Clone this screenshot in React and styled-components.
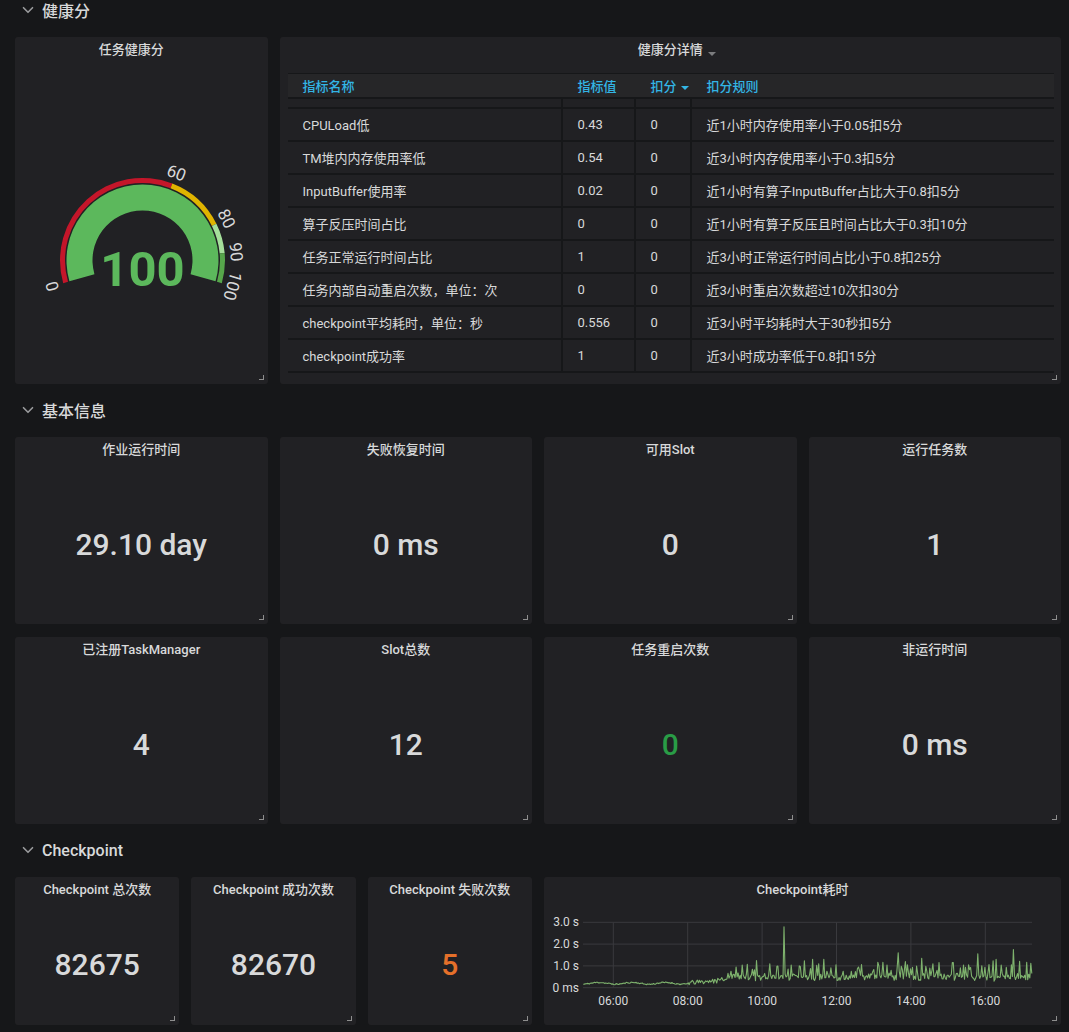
import styled, { createGlobalStyle } from "styled-components";
import { ChevronDown } from "lucide-react";

const GlobalStyle = createGlobalStyle`
  html, body { margin: 0; padding: 0; background: #161719; }
  body {
    font-family: Roboto, "Noto Sans CJK SC", sans-serif;
    color: #d8d9da;
  }
`;

const Page = styled.div`
  padding: 0 8px 8px 15px;
`;

const RowHeader = styled.div`
  display: flex;
  align-items: center;
  gap: 5px;
  height: 20px;
  margin: ${(p) => (p.$first ? "0" : "16px")} 0 17px 4px;
  font-size: 16px;
  font-weight: 500;
  color: #d8d9da;
  & svg { color: #9a9b9d; }
`;

const Grid = styled.div`
  display: grid;
  grid-template-columns: repeat(24, minmax(0, 1fr));
  grid-auto-rows: ${(p) => p.$rowHeight}px;
  column-gap: 12px;
  row-gap: 13px;
`;

const Panel = styled.div`
  grid-column: span ${(p) => p.$span};
  background: #212124;
  border-radius: 3px;
  position: relative;
  display: flex;
  flex-direction: column;
  overflow: hidden;
`;

const PanelTitle = styled.div`
  height: 26px;
  line-height: 26px;
  text-align: center;
  padding-right: ${(p) => p.$shift || 0}px;
  font-size: 13px;
  font-weight: 500;
  color: #d8d9da;
  & span { position: relative; }
`;

const Caret = styled.i`
  position: absolute;
  top: 10px;
  right: -13px;
  border-left: 4px solid transparent;
  border-right: 4px solid transparent;
  border-top: 4px solid #7b7c7e;
`;

const InlineCaret = styled.i`
  display: inline-block;
  margin-left: 4px;
  vertical-align: middle;
  border-left: 4px solid transparent;
  border-right: 4px solid transparent;
  border-top: 4px solid #33b5e5;
`;

const Resize = styled.span`
  position: absolute;
  right: 4px;
  bottom: 4px;
  width: 4px;
  height: 4px;
  border-right: 1px solid #8e8e8e;
  border-bottom: 1px solid #8e8e8e;
`;

const StatValue = styled.div`
  flex: 1;
  display: flex;
  align-items: center;
  justify-content: center;
  padding-top: ${(p) => p.$pad || 0}px;
  font-size: 30px;
  font-weight: 500;
  line-height: 1;
  color: ${(p) => p.$color || "#d8d9da"};
`;

/* ---------- table ---------- */

const Table = styled.div`
  margin: 10px 7px 0 8px;
  font-size: 13px;
`;

const cols = "275px 73px 56px 1fr";

const HeadRow = styled.div`
  box-sizing: border-box;
  display: grid;
  grid-template-columns: ${cols};
  height: 26px;
  align-items: center;
  background: #262628;
  border-top: 1px solid #161719;
  border-bottom: 2px solid #161719;
  color: #33b5e5;
  font-weight: 500;
`;

const HeadCell = styled.div`
  padding-left: 15px;
`;

const BodyRow = styled.div`
  box-sizing: border-box;
  display: grid;
  grid-template-columns: ${cols};
  height: ${(p) => p.$h}px;
  border-bottom: 2px solid #161719;
`;

const Cell = styled.div`
  display: flex;
  align-items: center;
  padding-left: 15px;
  border-right: ${(p) => (p.$last ? "none" : "2px solid #161719")};
  color: #d8d9da;
  white-space: nowrap;
`;

const rows = [
  ["CPULoad低", "0.43", "0", "近1小时内存使用率小于0.05扣5分"],
  ["TM堆内内存使用率低", "0.54", "0", "近3小时内存使用率小于0.3扣5分"],
  ["InputBuffer使用率", "0.02", "0", "近1小时有算子InputBuffer占比大于0.8扣5分"],
  ["算子反压时间占比", "0", "0", "近1小时有算子反压且时间占比大于0.3扣10分"],
  ["任务正常运行时间占比", "1", "0", "近3小时正常运行时间占比小于0.8扣25分"],
  ["任务内部自动重启次数，单位：次", "0", "0", "近3小时重启次数超过10次扣30分"],
  ["checkpoint平均耗时，单位：秒", "0.556", "0", "近3小时平均耗时大于30秒扣5分"],
  ["checkpoint成功率", "1", "0", "近3小时成功率低于0.8扣15分"],
];

const HealthTable = () => (
  <Table>
    <HeadRow>
      <HeadCell>指标名称</HeadCell>
      <HeadCell>指标值</HeadCell>
      <HeadCell>扣分<InlineCaret /></HeadCell>
      <HeadCell>扣分规则</HeadCell>
    </HeadRow>
    <BodyRow $h={10}>
      <Cell /><Cell /><Cell /><Cell $last />
    </BodyRow>
    {rows.map((r, i) => (
      <BodyRow $h={33} key={i}>
        {r.map((c, j) => (
          <Cell key={j} $last={j === 3}>{c}</Cell>
        ))}
      </BodyRow>
    ))}
  </Table>
);

/* ---------- gauge ---------- */

const GCX = 127.5;
const GCY = 197.4;
const angleOf = (v) => ((196 - (v / 100) * 212) * Math.PI) / 180;
const pt = (r, v) => {
  const a = angleOf(v);
  return [GCX + r * Math.cos(a), GCY - r * Math.sin(a)];
};

const band = (rIn, rOut, v1, v2) => {
  const large = ((v2 - v1) / 100) * 212 > 180 ? 1 : 0;
  const [ox1, oy1] = pt(rOut, v1);
  const [ox2, oy2] = pt(rOut, v2);
  const [ix2, iy2] = pt(rIn, v2);
  const [ix1, iy1] = pt(rIn, v1);
  return `M${ox1} ${oy1} A${rOut} ${rOut} 0 ${large} 1 ${ox2} ${oy2} L${ix2} ${iy2} A${rIn} ${rIn} 0 ${large} 0 ${ix1} ${iy1} Z`;
};

const thresholds = [
  [0, 60, "#c4162a"],
  [60, 80, "#e0b400"],
  [80, 90, "#a5df9b"],
  [90, 100, "#56a64b"],
];

const ticks = [0, 60, 80, 90, 100];

const Gauge = () => (
  <svg width="253" height="321" viewBox="0 0 253 321">
    {thresholds.map(([a, b, c]) => (
      <path key={a} d={band(77.5, 82.5, a, b)} fill={c} />
    ))}
    <path d={band(50, 76, 0, 100)} fill="#5cb85c" />
    {ticks.map((v) => {
      const [x, y] = pt(94, v);
      const rot = 90 - (angleOf(v) * 180) / Math.PI;
      return (
        <text
          key={v}
          x={x}
          y={y}
          fill="#d8d9da"
          fontSize="17"
          fontFamily="Roboto, sans-serif"
          textAnchor="middle"
          dominantBaseline="central"
          transform={`rotate(${rot} ${x} ${y})`}
        >
          {v}
        </text>
      );
    })}
    <text
      x={GCX}
      y={GCY + 26}
      fill="#5cb85c"
      fontSize="49"
      fontWeight="700"
      fontFamily="Roboto, sans-serif"
      textAnchor="middle"
    >
      100
    </text>
  </svg>
);

/* ---------- graph ---------- */

const xOf = (t) => 69.3 + (t - 6) * 37.2;
const yOf = (v) => 82.7 - v * 21.8;

const makeRng = (seed) => () => {
  seed |= 0;
  seed = (seed + 0x6d2b79f5) | 0;
  let t = Math.imul(seed ^ (seed >>> 15), 1 | seed);
  t = (t + Math.imul(t ^ (t >>> 7), 61 | t)) ^ t;
  return ((t ^ (t >>> 14)) >>> 0) / 4294967296;
};

const spikes = [
  [9.3, 0.95], [9.85, 1.25], [10.58, 2.8], [11.0, 1.0], [11.35, 1.3],
  [11.65, 1.3], [12.0, 1.05], [13.65, 1.6], [13.85, 1.2], [14.3, 1.35],
  [14.75, 1.15], [15.8, 1.55], [15.55, 1.05], [16.3, 1.3], [16.75, 1.75],
  [12.6, 0.95], [13.15, 1.0], [10.2, 1.1], [15.1, 1.15],
];

const buildLine = () => {
  const rand = makeRng(11);
  const n = 440;
  const t0 = 5.19;
  const t1 = 17.25;
  const vals = [];
  for (let i = 0; i <= n; i++) {
    const t = t0 + (i * (t1 - t0)) / n;
    let v;
    if (t < 8) {
      v = 0.17 + 0.04 * Math.sin(t * 7) + rand() * 0.06;
    } else {
      const base = Math.min(0.38, 0.2 + (t - 8) * 0.12);
      v = base + (rand() - 0.4) * 0.2 + (t > 9 ? rand() * 0.2 : 0);
      if (t > 8.6 && rand() < 0.3) v += rand() * 0.65 * Math.min(1, t - 8.6);
    }
    vals.push([t, Math.max(0.05, v)]);
  }
  spikes.forEach(([st, sv]) => {
    let best = 0;
    vals.forEach(([t], i) => {
      if (Math.abs(t - st) < Math.abs(vals[best][0] - st)) best = i;
    });
    vals[best][1] = sv;
  });
  return vals.map(([t, v]) => `${xOf(t).toFixed(1)},${yOf(v).toFixed(1)}`).join(" ");
};

const linePoints = buildLine();

const Chart = styled.svg`
  display: block;
  margin-top: 2px;
  font-family: Roboto, sans-serif;
`;

const Graph = () => (
  <Chart width="517" height="120" viewBox="0 0 517 120">
    {[0, 1, 2, 3].map((v) => (
      <line key={v} x1="39" x2="488" y1={yOf(v)} y2={yOf(v)} stroke="#3a3a3e" strokeWidth="1" />
    ))}
    {[6, 8, 10, 12, 14, 16].map((h) => (
      <line key={h} x1={xOf(h)} x2={xOf(h)} y1={yOf(3)} y2={yOf(0)} stroke="#3a3a3e" strokeWidth="1" />
    ))}
    {["0 ms", "1.0 s", "2.0 s", "3.0 s"].map((l, i) => (
      <text key={l} x="35" y={yOf(i)} fill="#d8d9da" fontSize="12" textAnchor="end" dominantBaseline="central">
        {l}
      </text>
    ))}
    {[6, 8, 10, 12, 14, 16].map((h) => (
      <text key={h} x={xOf(h)} y="96" fill="#d8d9da" fontSize="12" textAnchor="middle" dominantBaseline="central">
        {String(h).padStart(2, "0")}:00
      </text>
    ))}
    <polyline points={linePoints} fill="none" stroke="#7eb26d" strokeWidth="1.1" strokeLinejoin="round" />
  </Chart>
);

/* ---------- page ---------- */

const basic = [
  ["作业运行时间", "29.10 day"],
  ["失败恢复时间", "0 ms"],
  ["可用Slot", "0"],
  ["运行任务数", "1"],
  ["已注册TaskManager", "4"],
  ["Slot总数", "12"],
  ["任务重启次数", "0", "#299c46"],
  ["非运行时间", "0 ms"],
];

const checkpoints = [
  ["Checkpoint 总次数", "82675"],
  ["Checkpoint 成功次数", "82670"],
  ["Checkpoint 失败次数", "5", "#e5702a"],
];

const Section = ({ title, first }) => (
  <RowHeader $first={first}>
    <ChevronDown size={18} strokeWidth={2.2} />
    {title}
  </RowHeader>
);

export default function App() {
  return (
    <Page>
      <GlobalStyle />
      <Section title="健康分" first />
      <Grid $rowHeight={347}>
        <Panel $span={6}>
          <PanelTitle $shift={20}>任务健康分</PanelTitle>
          <Gauge />
          <Resize />
        </Panel>
        <Panel $span={18}>
          <PanelTitle>
            <span>健康分详情<Caret /></span>
          </PanelTitle>
          <HealthTable />
          <Resize />
        </Panel>
      </Grid>

      <Section title="基本信息" />
      <Grid $rowHeight={187}>
        {basic.map(([t, v, c]) => (
          <Panel $span={6} key={t}>
            <PanelTitle>{t}</PanelTitle>
            <StatValue $color={c} $pad={2}>{v}</StatValue>
            <Resize />
          </Panel>
        ))}
      </Grid>

      <Section title="Checkpoint" />
      <Grid $rowHeight={148}>
        {checkpoints.map(([t, v, c]) => (
          <Panel $span={4} key={t}>
            <PanelTitle>{t}</PanelTitle>
            <StatValue $color={c} $pad={2}>{v}</StatValue>
            <Resize />
          </Panel>
        ))}
        <Panel $span={12}>
          <PanelTitle>Checkpoint耗时</PanelTitle>
          <Graph />
          <Resize />
        </Panel>
      </Grid>
    </Page>
  );
}
